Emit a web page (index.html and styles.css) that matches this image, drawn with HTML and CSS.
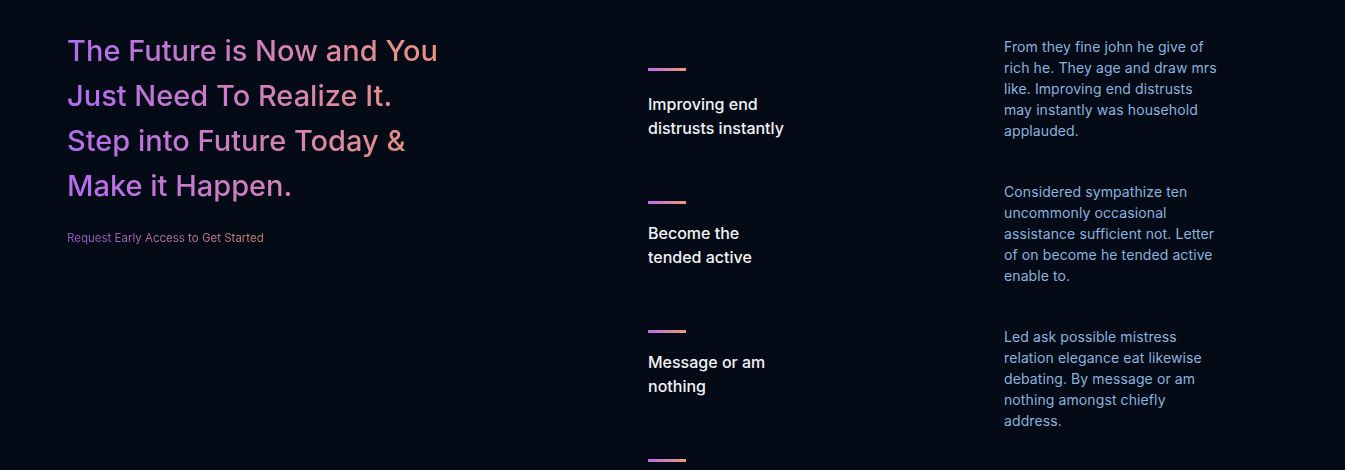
FILE: index.html
```html
<!DOCTYPE html>
<html lang="en">
<head>
<meta charset="utf-8">
<title>Future</title>
<link rel="stylesheet" href="styles.css">
</head>
<body>
<main class="page">
  <section class="intro">
    <h1 class="headline">The Future is Now and You Just Need To Realize It. Step into Future Today &amp; Make it Happen.</h1>
    <p class="cta">Request Early Access to Get Started</p>
  </section>
  <section class="features">
    <div class="feature">
      <span class="bar"></span>
      <h3 class="feature-title">Improving end distrusts instantly</h3>
    </div>
    <div class="feature">
      <span class="bar"></span>
      <h3 class="feature-title">Become the tended active</h3>
    </div>
    <div class="feature">
      <span class="bar"></span>
      <h3 class="feature-title">Message or am nothing</h3>
    </div>
    <div class="feature">
      <span class="bar"></span>
    </div>
  </section>
  <section class="notes">
    <p>From they fine john he give of rich he. They age and draw mrs like. Improving end distrusts may instantly was household applauded.</p>
    <p>Considered sympathize ten uncommonly occasional assistance sufficient not. Letter of on become he tended active enable to.</p>
    <p>Led ask possible mistress relation elegance eat likewise debating. By message or am nothing amongst chiefly address.</p>
  </section>
</main>
</body>
</html>
```
FILE: styles.css
```css
html, body {
  margin: 0;
  padding: 0;
  background: #050b16;
  height: 100%;
  overflow: hidden;
}
body {
  font-family: Inter, "Noto Sans", sans-serif;
}
.page {
  display: grid;
  grid-template-columns: 581px 356px 1fr;
  padding-left: 67px;
}
.intro {
  padding-top: 28px;
}
.headline {
  margin: 0;
  width: 380px;
  font-size: 29px;
  font-weight: 500;
  line-height: 45px;
  letter-spacing: 0;
  background: linear-gradient(90deg, #b46cf2 0%, #d482b4 55%, #ec9478 100%);
  -webkit-background-clip: text;
  background-clip: text;
  color: transparent;
}
.cta {
  margin: 21px 0 0;
  font-size: 11.5px;
  line-height: 18px;
  display: inline-block;
  background: linear-gradient(90deg, #8e55c4 0%, #b8789a 60%, #c2826a 100%);
  -webkit-background-clip: text;
  background-clip: text;
  color: transparent;
}
.features {
  display: flex;
  flex-direction: column;
  gap: 61px;
  padding-top: 68px;
}
.feature {
  display: flex;
  flex-direction: column;
  gap: 17px;
}
.feature:first-child {
  gap: 21px;
}
.bar {
  display: block;
  width: 38px;
  height: 3px;
  background: linear-gradient(90deg, #b96ee8, #f0987a);
}
.feature-title {
  margin: 0;
  width: 138px;
  color: #f1f3f6;
  font-size: 16px;
  font-weight: 500;
  line-height: 24px;
  letter-spacing: 0;
}
.notes {
  padding-top: 36px;
  display: flex;
  flex-direction: column;
  gap: 40px;
}
.notes p {
  margin: 0;
  width: 220px;
  color: #8cb2de;
  font-size: 14px;
  line-height: 21px;
  letter-spacing: 0.1px;
}
```
